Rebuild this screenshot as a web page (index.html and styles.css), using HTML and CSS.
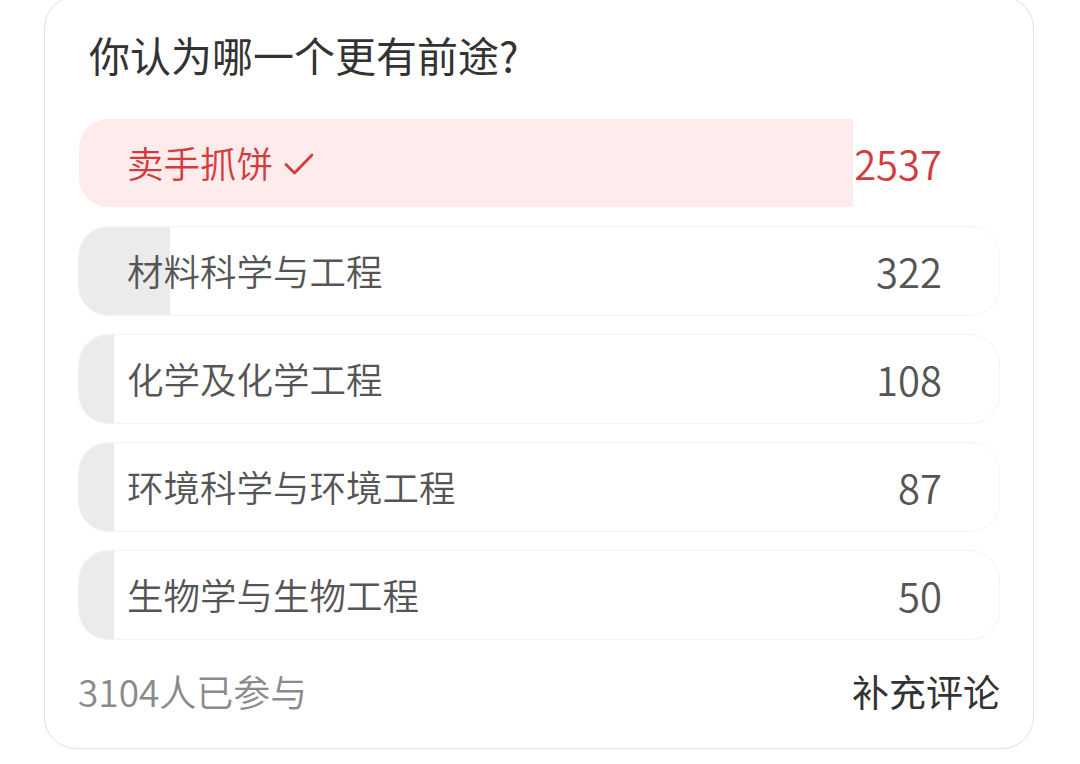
FILE: index.html
```html
<!DOCTYPE html>
<html lang="zh-CN">
<head>
<meta charset="utf-8">
<title>投票</title>
<link rel="stylesheet" href="styles.css">
</head>
<body>
<div class="card">
  <div class="title">你认为哪一个更有前途?</div>
  <div class="options">
    <div class="option selected">
      <div class="fill" style="width:775px"></div>
      <span class="label">卖手抓饼<svg class="check" width="30" height="24" viewBox="0 0 30 24"><path d="M2 12.5 L10.5 21 L28 3" fill="none" stroke="#d43b3f" stroke-width="2.8" stroke-linecap="round" stroke-linejoin="round"/></svg></span>
      <span class="count">2537</span>
    </div>
    <div class="option">
      <div class="fill" style="width:92px"></div>
      <span class="label">材料科学与工程</span>
      <span class="count">322</span>
    </div>
    <div class="option">
      <div class="fill" style="width:36px"></div>
      <span class="label">化学及化学工程</span>
      <span class="count">108</span>
    </div>
    <div class="option">
      <div class="fill" style="width:36px"></div>
      <span class="label">环境科学与环境工程</span>
      <span class="count">87</span>
    </div>
    <div class="option">
      <div class="fill" style="width:36px"></div>
      <span class="label">生物学与生物工程</span>
      <span class="count">50</span>
    </div>
  </div>
  <div class="footer">
    <span class="participants">3104人已参与</span>
    <span class="comment">补充评论</span>
  </div>
</div>
</body>
</html>
```

FILE: styles.css
```css
html, body {
  margin: 0;
  padding: 0;
  background: #ffffff;
}

body {
  font-family: "Noto Sans CJK SC", "Noto Sans", sans-serif;
  font-weight: 350;
  width: 1080px;
  height: 764px;
  overflow: hidden;
}

.card {
  box-sizing: border-box;
  margin: -4px 0 0 44px;
  width: 990px;
  height: 753px;
  border: 1px solid #e2e2e2;
  border-radius: 32px;
  background: #ffffff;
  padding: 0 33px;
  display: flex;
  flex-direction: column;
}

.title {
  margin-top: 36px;
  padding-left: 11px;
  font-size: 41px;
  font-weight: 400;
  line-height: 42px;
  height: 42px;
  color: #333333;
}

.options {
  margin-top: 43px;
  display: flex;
  flex-direction: column;
  gap: 18px;
}

.option {
  position: relative;
  box-sizing: border-box;
  height: 90px;
  border-radius: 30px;
  border: 1px solid #f4f4f4;
  overflow: hidden;
  display: flex;
  align-items: center;
  justify-content: space-between;
  padding: 0 57px 0 48px;
  color: #555555;
}

.option.selected {
  border-color: transparent;
  color: #d43b3f;
}

.fill {
  position: absolute;
  left: -1px;
  top: -1px;
  bottom: -1px;
  background: #ebebeb;
}

.option.selected .fill {
  background: #fdeceb;
}

.label {
  position: relative;
  font-size: 36.5px;
  line-height: 40px;
  display: flex;
  align-items: center;
}

.check {
  margin-left: 11px;
  margin-top: 2px;
}

.count {
  position: relative;
  font-size: 40px;
  line-height: 40px;
}

.footer {
  margin-top: 33px;
  display: flex;
  justify-content: space-between;
  align-items: center;
  height: 36px;
}

.participants {
  font-size: 37px;
  line-height: 36px;
  color: #8a8a8a;
}

.comment {
  font-size: 37px;
  font-weight: 400;
  line-height: 36px;
  color: #333333;
}
```
